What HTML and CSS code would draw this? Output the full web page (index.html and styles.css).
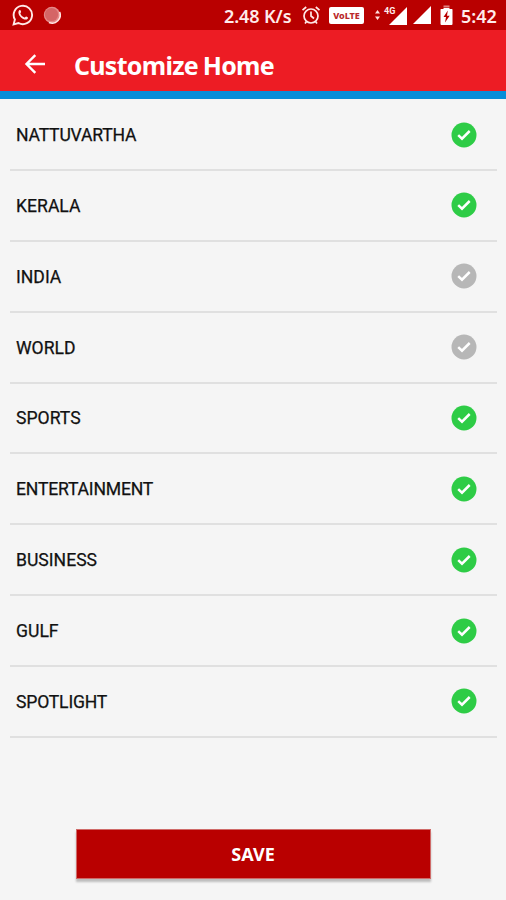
FILE: index.html
```html
<!DOCTYPE html>
<html lang="en">
<head>
<meta charset="utf-8">
<title>Customize Home</title>
<link rel="stylesheet" href="styles.css">
</head>
<body>
<div class="status">
  <svg class="whatsapp" width="22" height="22" viewBox="0 0 22 22" fill="none" stroke="#ffe9e7" stroke-width="1.9"><path d="M1.6 20.4 2.9 15.5A9.2 9.2 0 1 1 6.5 19Z"/><path d="M7.2 6.3c.8-.7 1.5-.3 1.9 1.6.1.5-.8 1-.8 1.4.6 2 2.2 3.6 4.2 4.3.6.2 1.1-1.3 1.7-1 1.8.7 2.2 1.1 1.5 2.1-1.4 1.8-4.7.7-6.9-1.5-2.2-2.1-3.2-5.3-1.6-6.9Z" fill="#ffe9e7" stroke="none"/></svg>
  <svg class="record" width="18" height="18" viewBox="0 0 18 18"><circle cx="9" cy="9" r="8.2" fill="#e58a89"/><path d="M16.6 6A8 8 0 0 1 6 16.4" fill="none" stroke="#ffe5e2" stroke-width="1.6"/><circle cx="8.5" cy="8.5" r="6.6" fill="#d56566"/></svg>
  <span class="speed">2.48 K/s</span>
  <svg class="alarm" width="20" height="20" viewBox="0 0 20 20" fill="none" stroke="#ffe9e7" stroke-width="1.7"><circle cx="10" cy="11" r="7"/><path d="M1.5 5.2 5.2 2M18.5 5.2 14.8 2M10 6.5V11l3 2.5M5.5 16.5 4 18.5M14.5 16.5 16 18.5"/></svg>
  <span class="volte">VoLTE</span>
  <svg class="updown" width="7" height="12" viewBox="0 0 7 12" fill="#ffe0de"><path d="M3.5 1 6 4.5H1ZM3.5 11 6 7.5H1Z"/></svg>
  <span class="network"><svg width="24" height="19" viewBox="0 0 24 19"><path d="M24 1V19H6Z" fill="#fff"/></svg><b>4G</b></span>
  <svg class="signal" width="18" height="18" viewBox="0 0 18 18"><path d="M18 0V18H0Z" fill="#fff"/></svg>
  <svg class="battery" width="13" height="20" viewBox="0 0 13 20"><path d="M3.5 1.2H9.5" stroke="#e79a98" stroke-width="1.3"/><path d="M1 4H3.5V2.8H9.5V4H12Q12.5 4 12.5 5V19Q12.5 20 11.5 20H1.5Q.5 20 .5 19V5Q.5 4 1 4Z" fill="#fff"/><path d="M7.8 5.5 3.5 12H6L5 17.5 9.7 10.7H7Z" fill="#b90000"/></svg>
  <span class="time">5:42</span>
</div>
<header class="toolbar">
  <svg class="back" width="22" height="20" viewBox="0 0 22 20" fill="none" stroke="#fff" stroke-width="2.4"><path d="M21 10H3M11.3 1.2 2.5 10 11.3 18.8"/></svg>
  <h1>Customize Home</h1>
</header>
<main class="list">
  <div class="row tight"><span>NATTUVARTHA</span><svg class="check" viewBox="0 0 26 26"><circle cx="13" cy="13" r="12.5"/><path d="M7.2 13.1 11 16.7 18.7 9"/></svg></div>
  <div class="row"><span>KERALA</span><svg class="check" viewBox="0 0 26 26"><circle cx="13" cy="13" r="12.5"/><path d="M7.2 13.1 11 16.7 18.7 9"/></svg></div>
  <div class="row"><span>INDIA</span><svg class="check off" viewBox="0 0 26 26"><circle cx="13" cy="13" r="12.5"/><path d="M7.2 13.1 11 16.7 18.7 9"/></svg></div>
  <div class="row"><span>WORLD</span><svg class="check off" viewBox="0 0 26 26"><circle cx="13" cy="13" r="12.5"/><path d="M7.2 13.1 11 16.7 18.7 9"/></svg></div>
  <div class="row"><span>SPORTS</span><svg class="check" viewBox="0 0 26 26"><circle cx="13" cy="13" r="12.5"/><path d="M7.2 13.1 11 16.7 18.7 9"/></svg></div>
  <div class="row tight"><span>ENTERTAINMENT</span><svg class="check" viewBox="0 0 26 26"><circle cx="13" cy="13" r="12.5"/><path d="M7.2 13.1 11 16.7 18.7 9"/></svg></div>
  <div class="row"><span>BUSINESS</span><svg class="check" viewBox="0 0 26 26"><circle cx="13" cy="13" r="12.5"/><path d="M7.2 13.1 11 16.7 18.7 9"/></svg></div>
  <div class="row"><span>GULF</span><svg class="check" viewBox="0 0 26 26"><circle cx="13" cy="13" r="12.5"/><path d="M7.2 13.1 11 16.7 18.7 9"/></svg></div>
  <div class="row tight"><span>SPOTLIGHT</span><svg class="check" viewBox="0 0 26 26"><circle cx="13" cy="13" r="12.5"/><path d="M7.2 13.1 11 16.7 18.7 9"/></svg></div>
</main>
<footer class="actions"><button class="save">SAVE</button></footer>
</body>
</html>
```
FILE: styles.css
```css
* { box-sizing: border-box; }
body {
  margin: 0;
  height: 900px;
  display: flex;
  flex-direction: column;
  background: #f5f5f5;
  font-family: Roboto, sans-serif;
  overflow: hidden;
}
svg { display: block; flex: none; }
.status {
  height: 30px;
  flex: none;
  display: flex;
  align-items: center;
  padding: 0 7px 0 12px;
  background: #b90000;
  color: #ffeceb;
  font: 600 18px/30px "Noto Sans", sans-serif;
  white-space: nowrap;
}
.record { margin-left: 9px; }
.speed { margin-left: auto; width: 69px; letter-spacing: -0.1px; margin-top: 1px; }
.alarm { margin-left: 8px; }
.volte {
  width: 35px;
  height: 17px;
  margin-left: 8px;
  border-radius: 2px;
  background: #fff;
  color: #b9292b;
  font: 800 9px/17px "Noto Sans", sans-serif;
  letter-spacing: 0;
  text-align: center;
}
.updown { margin-left: 10px; }
.network { position: relative; margin-left: 2px; }
.network b { position: absolute; left: 1px; top: 1px; padding-right: 1px; font: 700 9px/9px Roboto, sans-serif; background: #b90000; }
.signal { margin-left: 6px; }
.battery { margin-left: 9px; }
.time { width: 38px; margin: 1px 0 0 8px; }
.toolbar {
  height: 69px;
  flex: none;
  display: flex;
  align-items: center;
  padding-left: 24px;
  background: #ed1c24;
  border-bottom: 8px solid #078dd9;
}
.back { margin-top: 7px; }
h1 {
  margin: 8px 0 0 28px;
  color: #fff;
  font: 700 25px/34px "Noto Sans", sans-serif;
  letter-spacing: -0.72px;
  word-spacing: -1px;
}
.list { padding: 1.2px 9px 0 10px; }
.row {
  height: 70.85px;
  display: flex;
  align-items: center;
  justify-content: space-between;
  padding: 0 20px 0 6px;
  border-bottom: 2px solid #e0e0e0;
  color: #111;
  font-size: 17.6px;
  -webkit-text-stroke: 0.25px #111;
}
.tight { letter-spacing: -0.2px; }
.row span { margin-top: 1px; }
.check { width: 26px; height: 26px; }
.check circle { fill: #2ecc46; }
.check path { fill: none; stroke: #fff; stroke-width: 2.5; }
.check.off circle { fill: #b7b7b7; }
.actions { margin-top: 90.8px; display: flex; justify-content: center; }
.save {
  width: 355px;
  height: 50px;
  padding: 1px 0 0;
  border: 1px solid #cf6b69;
  background: #b90000;
  color: #fff;
  font: 700 18px/24px "Noto Sans", sans-serif;
  box-shadow: 0 3px 2px #bdbdbd;
}
```
